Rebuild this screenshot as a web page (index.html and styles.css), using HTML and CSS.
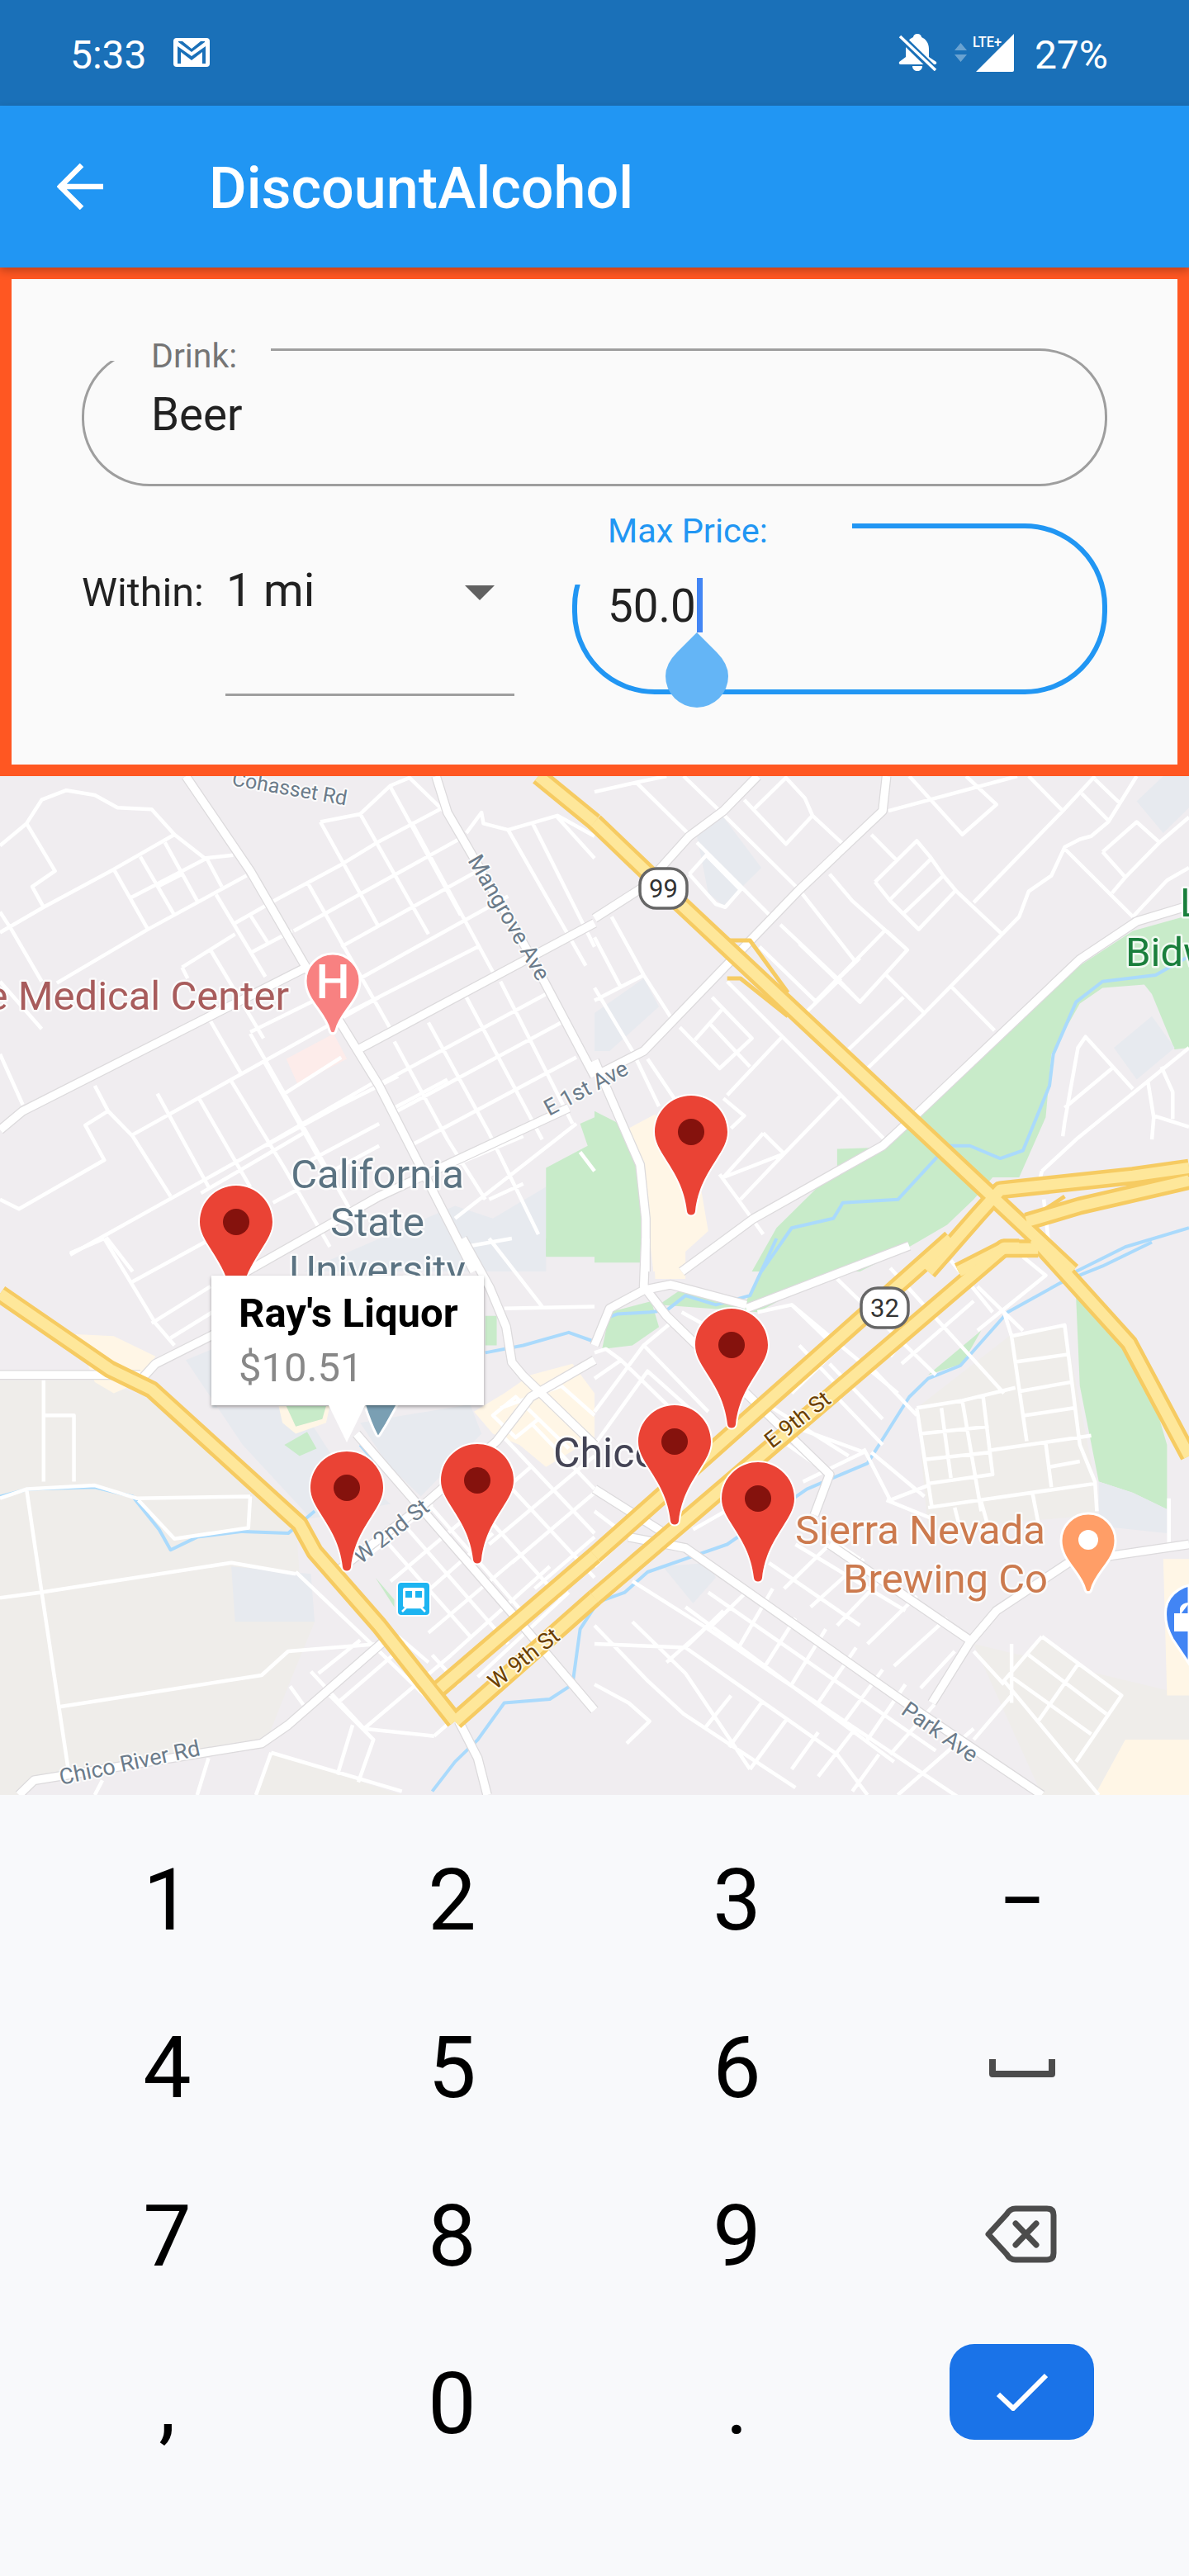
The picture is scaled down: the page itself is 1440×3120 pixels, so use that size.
FILE: index.html
```html
<!DOCTYPE html>
<html lang="en">
<head>
<meta charset="utf-8">
<title>DiscountAlcohol</title>
<link rel="stylesheet" href="styles.css">
</head>
<body>
<div class="screen">
  <header class="status">
    <div class="status-left">
      <span class="status-text">5:33</span>
      <svg class="gmail" viewBox="0 0 44 35" width="44" height="35"><rect width="44" height="35" rx="4" fill="#fff"/><path d="M5 31V10l17 12L39 10v21h-4V17L22 27 9 17v14z M6 4h5l11 9L33 4h5v1L22 17 6 5z" fill="#1a70b8"/></svg>
    </div>
    <div class="status-right">
      <svg class="bell" viewBox="0 0 47 45" width="47" height="45"><path d="M23 0C26 0 28 2 28 4C33 6 37 11 37 18V28L46 34Q47 37 44 37H3Q0 37 1 34L9 28V18C9 11 13 6 18 4C18 2 20 0 23 0Z" fill="#fff"/><path d="M17 39H29C29 43 26 45 23 45S17 43 17 39Z" fill="#fff"/><path d="M1 2L45 45" stroke="#1a70b8" stroke-width="9"/><path d="M2 3L45 44" stroke="#fff" stroke-width="3.500"/></svg>
      <svg class="signal" viewBox="0 0 72 47" width="72" height="47"><path d="M0 21L7.500 12 15 21zM0 26h15L7.500 35z" fill="#fff" opacity=".35"/><text x="22" y="17" class="lte" textLength="35" lengthAdjust="spacingAndGlyphs">LTE+</text><path d="M26 47L72 1v44a2 2 0 0 1-2 2z" fill="#fff"/></svg>
      <span class="status-text">27%</span>
    </div>
  </header>
  <div class="appbar">
    <svg class="back" viewBox="0 0 58 56" width="58" height="56"><path d="M2 28h54M30 2L4 28l26 26" fill="none" stroke="#fff" stroke-width="6.500"/></svg>
    <h1 class="title">DiscountAlcohol</h1>
  </div>
  <section class="form">
    <div class="drink">
      <label class="float-label">Drink:</label>
      <span class="value">Beer</span>
    </div>
    <div class="row">
      <span class="within">Within:</span>
      <div class="dropdown">
        <span class="dd-value">1 mi</span>
        <span class="dd-arrow"></span>
      </div>
      <div class="price">
        <label class="float-label active">Max Price:</label>
        <span class="value">50.0</span>
        <span class="cursor"></span>
        <svg class="handle" viewBox="0 0 76 91" width="76" height="91"><path d="M38 0L62 24Q76 38 76 53A38 38 0 0 1 0 53Q0 38 14 24Z" fill="#64b5f6"/></svg>
      </div>
    </div>
  </section>
  <section class="map">
    <svg class="map-art" viewBox="0 940 1440 1234" width="1440" height="1234">
      <defs>
        <g id="majors">
          <g transform="translate(0 940) scale(.4592 .3827)"><path d="M490 0L660 300L800 590L1000 980L1250 1568M0 1120L60 1060L800 610M945 865L1568 465M650 1568L1000 1330L1500 1050M1150 0L1180 115L1400 570L1568 950"/></g>
          <g transform="translate(720 940) scale(.4592 .3827)"><path d="M430 0L340 110L250 190L130 350L0 450M770 0L760 110L540 360L130 870L0 950M1568 410L1430 460L1280 580L850 1070L760 1170L420 1400L230 1568M0 900L120 1230L135 1400L135 1568"/></g>
          <g transform="translate(0 1500) scale(.4592 .4464)"><path d="M0 370L370 370M370 385L410 340L555 265L840 100M1220 0L1292 134L1335 240L1350 336L1380 373L1568 560M940 530L1370 1040L1568 1280M50 1510L90 1470L510 1400L690 1370L760 1320L1010 1095M1210 1310L1260 1410L1285 1510M880 910L1120 720L1310 550L1400 430L1568 330"/></g>
          <g transform="translate(720 1500) scale(.4592 .4464)"><path d="M135 0L130 130L190 210L620 640L580 750M0 290L40 190L130 140L200 125L400 180M90 810L240 840L820 1260L1180 1510M620 830L990 1090M1568 830L1370 860L1250 880L1060 1010L990 1095L890 1260M400 190L830 20M0 680L200 810"/></g>
        </g>
        <g id="highways">
          <g transform="translate(0 940) scale(.4592 .3827)"><path d="M1420 0L1568 145"/></g>
          <g transform="translate(720 940) scale(.4592 .3827)"><path d="M0 145L200 375L1260 1568M1568 1240L1420 1265L1070 1310L1010 1390L880 1568M1568 1280L1280 1360L1140 1410M1170 1495L1080 1495L960 1568"/></g>
          <g transform="translate(0 1500) scale(.4592 .4464)"><path d="M0 150L290 355L400 410L790 775L830 850L1000 1050L1200 1310M1568 860L1160 1220M1568 975L1200 1310"/></g>
          <g transform="translate(720 1500) scale(.4592 .4464)"><path d="M940 0L0 860M1120 25L1080 25L0 975M1160 0L1410 285L1568 590"/></g>
        </g>
        <g id="pin">
          <path d="M0 0C24.300 0 44 19.700 44 44C44 56 38 65 30 78C20 94 8 112 5 140C4.500 146 -4.500 146 -5 140C-8 112 -20 94 -30 78C-38 65 -44 56 -44 44C-44 19.700 -24.300 0 0 0Z" fill="#ea4335" stroke="#fff" stroke-width="4" paint-order="stroke"/>
          <circle cy="44" r="16" fill="#85120d"/>
        </g>
      </defs>

      <rect x="0" y="940" width="1440" height="1234" fill="#f0edf0"/>

      <g class="zones">
        <g transform="translate(0 1500) scale(.4592 .4464)">
          <path class="agri" d="M0 385H250L390 430L780 770L790 910L830 1040L760 1215L700 1370L510 1400L90 1470L50 1510H0Z"/>
          <path class="agri" d="M720 1395L1060 1510H680Z"/>
          <path class="campus-blue" d="M490 330L560 300V460H750L820 500L870 580L1030 720L820 760L640 560ZM950 500L1240 450L1270 530L1110 700L1020 610ZM610 890L820 910L830 1040L620 1040Z"/>
          <path class="cream" d="M200 260L300 265L410 320L370 390L300 420L250 390ZM1250 470L1330 420L1400 370L1510 340L1568 420L1568 540L1440 620L1370 560L1300 530ZM735 455H870L860 500L780 530L745 500Z"/>
          <path class="green" d="M750 560L810 525L835 570L790 590ZM990 920L1040 980V1000ZM755 455H860L850 490L780 510Z"/>
          <path class="green" d="M1440 0H1568V50H1440ZM1280 210H1310V290H1280Z"/>
        </g>
        <g transform="translate(720 1500) scale(.4592 .4464)">
          <path class="agri" d="M850 460L1100 260L1240 235L1320 660L1325 750L880 790ZM1180 1080L1390 1240L1270 1420L1090 1210ZM1000 1100L1568 1240V1360H1400L1320 1510L1180 1510Z"/>
          <path class="green" d="M0 0H120V60H0ZM20 300L40 200L150 170L170 240L100 290ZM170 180L240 130L400 170L480 0H800L430 200L300 190ZM1270 160L1430 280L1510 560V735L1420 690L1330 660L1280 400ZM880 370L1020 250L970 340Z"/>
          <path class="campus-blue" d="M1330 660L1420 690L1510 735V800L1330 780ZM180 890L300 880L320 920L260 990Z"/>
          <path class="cream" d="M1320 1510L1400 1360H1568V1510ZM1500 870H1568V1240H1510ZM155 0H240V110H160Z"/>
        </g>
        <g transform="translate(0 940) scale(.4592 .3827)">
          <path class="pinkish" d="M755 895L880 815L915 895L785 975Z"/>
          <path class="campus-blue" d="M1300 1400L1440 1300V1568H800L1200 1360Z"/>
          <path class="green" d="M1530 1100L1568 1080V1520L1440 1520V1240L1550 1170Z"/>
        </g>
        <g transform="translate(720 940) scale(.4592 .3827)">
          <path class="green" d="M0 1060L90 1115L130 1270L120 1540H0Z"/>
          <path class="green" d="M415 1568L480 1430L640 1240L640 1180L760 1175L850 1075L1280 600L1420 490L1568 440V860L1530 865L1470 690L1450 660L1340 670L1280 720L1205 880L1190 1080L1120 1270L1050 1270L1000 1340L930 1420L830 1490L700 1568Z"/>
          <path class="cream" d="M90 1115L160 1070L240 1230L280 1300L300 1440L235 1510V1568H155L140 1400L130 1240Z"/>
          <path class="campus-blue" d="M270 190L340 130L440 290L340 410L300 370ZM0 750L130 640L170 730L40 870H0ZM1430 80L1500 0H1568V100L1500 180ZM1370 860L1470 760L1530 860L1430 960Z"/>
        </g>
      </g>

      <g class="water">
        <g transform="translate(720 940) scale(.4592 .3827)"><path d="M440 1568L520 1430L630 1400L655 1350L800 1340L900 1210L930 1170L990 1170L1070 1210L1130 1185L1200 980L1210 880L1270 715L1340 650L1480 630L1568 570M1270 1568L1400 1490L1568 1430"/></g>
        <g transform="translate(0 1500) scale(.4592 .4464)"><path d="M0 700L75 680L250 675L350 700L420 790L450 845L520 810L640 795L760 800L830 740M1140 1500L1200 1420L1260 1360L1330 1260L1450 1250L1510 1210L1530 1060L1568 1000M1280 310L1380 290L1500 255L1568 280M950 560L1000 620"/></g>
        <g transform="translate(720 1500) scale(.4592 .4464)"><path d="M0 990L80 960L140 905L280 855L350 830L560 680L720 610L830 430L880 380L965 345L1090 200L1230 120L1340 75L1470 10M20 220L60 205L145 200L190 195L240 155L320 180L410 155L480 0"/></g>
      </g>

      <g class="minor">
        <g transform="translate(0 940) scale(.4592 .3827)"><path d="M0 220L70 150L110 75L175 45L250 60L310 100L400 105L460 185L540 260L615 250M70 150L145 300L85 350L115 415M0 495L115 415L300 295L460 185M0 430L30 485L110 650M300 295L390 485M370 255L460 440M435 210L520 395M345 385L545 260M415 350L480 310M150 655L390 485L650 315M545 260L585 350M570 375L700 635M620 465L730 390L900 280L995 210L1160 105M660 440L705 525M660 560L770 490M480 605L620 500M480 605L495 640M555 550L695 830M810 335L1030 800M845 145L950 120L1030 30L1080 5L1170 110M845 145L1000 480M950 120L1130 500M1030 35L1215 440M775 490L1210 200M900 540L1260 300M950 640L1340 380M900 760L1260 540M1000 975L1440 690M1040 1065L1480 780M1090 1165L1520 890M1200 1400L1520 1100M1290 1340L1380 1290M1040 840L1180 1150L1280 1340M1130 780L1290 1130L1420 1450M1230 700L1430 1150M1320 650L1510 1100M1340 170L1545 600M1405 150L1568 540M1470 130L1568 260M1230 180L1270 115L1275 150L1340 170L1470 125L1568 190M1085 145L1300 620M250 980L285 1060L350 1140L450 1330M285 1060L225 1105L275 1215L50 1370L0 1340M415 1005L550 1300M525 1020L660 1300M610 965L750 1240L870 1490M555 775L635 940M660 815L795 1100L960 1450M695 900L860 1250M350 1135L700 900L1000 700M185 1515L640 1210L1000 960M750 1005L900 890M800 1100L1050 950M530 1320L800 1130M700 1170L930 1020M0 880L60 1040M0 650L110 800M280 1460L350 1568M660 810L880 680M720 1350L1000 1170M820 1215L1000 1100M1040 1050L1180 960M1200 1230L1380 1140M1530 1190L1568 1250"/></g>
        <g transform="translate(720 940) scale(.4592 .3827)"><path d="M0 50L110 20L190 0M110 20L250 185M235 0L330 110L540 360L690 590M270 210L470 450M250 310L295 250L385 360L345 415L320 405L250 310M395 75L505 215L575 125L555 70L505 5L420 105M575 125L660 220M620 310L680 395L825 550L700 715L540 530M730 185L800 270M740 335L850 205L885 255L920 315L955 365L1075 500M740 335L780 395L855 485L950 365M780 390L885 265M815 435L920 315M1000 400L1235 110L1320 0M1075 500L1120 445L1145 365L1205 315L1240 225L1280 200L1310 190L1355 145L1430 0M1145 0L1235 110M1285 55L1355 140M1320 10L1385 85M830 0L970 185L1060 90L980 0M775 110L1115 0M1240 230L1420 445M1340 240L1430 145L1490 210L1568 130M1340 240L1400 320L1490 210M1365 370L1400 320M1420 445L1510 330L1568 290M435 540L585 715M490 470L640 640L700 715M585 710L765 490M640 645L700 575M560 745L650 640M770 490L825 550M770 630L870 750L1075 500M670 865L815 700M720 925L870 750M940 665L1055 805M350 650L650 1010L765 1150M495 825L350 1010M650 1010L500 1195L340 1270M310 700L415 830L330 925L225 795M265 835L335 740M305 785L410 920M130 630L0 710M45 445L130 630L205 770M0 670L100 870L170 1045M140 895L210 1020M340 1020L395 1075L360 1115M445 1130L500 1195M445 1130L340 1270M330 1260L415 1400L445 1450M385 1340L500 1195M1240 1095L1275 860L1295 825L1420 990M1240 1050L1365 925M1275 1145L1568 860M1495 920L1525 1000L1525 1085M1460 970L1475 1080L1470 1150M1475 1075L1568 1110M1180 1250L1275 1145M1170 1300L1180 1250M1185 1340L1200 1500M1240 1095L1235 1140M0 510L70 670"/></g>
        <g transform="translate(0 1500) scale(.4592 .4464)"><path d="M185 40L275 0M275 0L410 230L460 290M345 120L540 10M400 230L555 130M450 270L560 200M1240 20L1350 0M1330 190L1568 185M1290 0L1430 185M115 385V660M115 480H195V660M0 705L70 680L250 670L360 705L660 700M660 700L655 785L460 815L365 710M70 680L110 960L180 1440M0 975L110 960L610 880L780 910M160 1270L690 1185L760 1120L1000 1100M780 905L1010 1130L1190 1310M960 870L1140 720M1030 930L1250 740M1080 1000L1300 800M1130 1070L1360 870M1190 1130L1450 890M1260 1190L1500 960M1290 830L1568 590M1350 880L1568 690M1410 950L1568 810M1220 780L1400 620M1000 800L1240 1080M1060 770L1340 1100M1130 720L1400 1040M1200 660L1480 980M1270 590L1568 920M1320 530L1568 800M1400 500L1568 680M1430 420L1568 570M765 1215L800 1265M820 1175L960 1330L1145 1350M870 1240L985 1360L945 1475M930 1320L890 1455M715 1395L1060 1500M715 1395L675 1510M550 1410L520 1510M270 1470L250 1510M1145 1350L1290 1220M960 1330L1190 1130M840 1180L950 1090M890 1260L1060 1110M1320 460L1480 400L1568 480M1360 430L1420 490L1360 540L1300 480ZM1420 490L1500 570M1140 1130L1210 1210M1050 1080L1130 1150"/></g>
        <g transform="translate(720 1500) scale(.4592 .4464)"><path d="M0 380L70 330L220 480M0 470L130 290L300 470M70 330L30 300L0 310M130 290L200 230L250 260M0 560L140 360L260 470M230 200L300 240M430 200L520 180L800 420M520 180L640 300L520 420M640 110L900 370M780 80L1080 420M940 60L1050 200M1010 130L1130 250M1130 50L1190 100L1010 250M810 340L1000 170M880 190L780 320M620 340L760 490M680 390L810 260M730 350L850 480M620 410L760 560M550 520L710 580L670 600L550 660M470 460L670 590M510 560L620 640M540 290L660 420M710 570L780 710M780 710L880 670M0 1100L240 1110M240 1110L640 1400L720 1510M300 960L900 1390M240 1000L790 1420M100 930L300 1060L470 1180L980 1530M0 1210L90 1260L145 1310L85 1370M0 1050L140 1200L235 1290L530 1490M100 1040L240 1180L410 1440M190 1150L300 1050M240 1110L340 1010M300 1060L410 950M380 1110L470 950M450 1160L530 1030M520 1210L610 1060M590 1260L690 1110M660 1310L760 1170M720 1360L820 1210M780 1400L900 1260M290 1330L360 1240M355 1380L440 1260M410 1440L510 1300M520 1440L590 1340M590 1460L680 1340M680 1500L750 1400M460 880L700 1050M530 830L820 1010M600 800L700 870M720 900L900 1020M500 950L620 830M570 1000L710 870M640 1050L780 900M720 1100L850 970M790 1160L930 1030M860 1220L950 1120M1000 1120L1080 1210M1180 1080L1390 1240L1270 1420M1180 1080L1080 1200L1330 1510M1145 1130L1350 1290M1100 1190L1310 1345M1275 1155L1170 1310M800 1510L1000 1330M1100 1240L1000 1360M1100 1260L1100 1100M0 740L90 810M170 700L260 780M0 890L110 780M130 870L250 740M260 790L430 690M1100 265L1240 235L1280 560L1320 660L1325 740M1100 265L1140 550M1110 335L1245 315M1120 415L1255 390M850 460L970 440L1110 405M1135 480L1265 460M850 460L890 730M860 530L1040 510M870 600L1045 580M970 440L1020 740M915 460L940 650M1025 430L1050 640L880 665M1040 575L1310 535M1190 555L1205 675M1200 620L1280 605M880 730L1320 665M1155 690L1170 770M1020 715L1035 770M950 730L960 770M1080 200L1100 265M1515 705V840M730 580L870 700M770 710L890 760"/></g>
      </g>

      <use href="#majors" class="casing"/>
      <use href="#majors" class="major"/>
      <g class="ramp" transform="translate(720 940) scale(.4592 .3827)"><path d="M355 520H410L510 685M350 640H385L510 760M1010 1390L1100 1320M1140 1410L1240 1330"/></g>
      <use href="#highways" class="hw-edge"/>
      <use href="#highways" class="hw-fill"/>

      <g>
        <text x="350" y="1223" text-anchor="end" class="poi poi-med">e Medical Center</text>
        <text x="457" y="1439" text-anchor="middle" class="poi poi-uni">California</text>
        <text x="457" y="1497" text-anchor="middle" class="poi poi-uni">State</text>
        <text x="457" y="1555" text-anchor="middle" class="poi poi-uni">University</text>
        <text x="670" y="1777" class="poi poi-city">Chico</text>
        <text x="963" y="1870" class="poi poi-bar">Sierra Nevada</text>
        <text x="1021" y="1929" class="poi poi-bar">Brewing Co</text>
        <text x="1429" y="1110" class="poi poi-park">L</text>
        <text x="1363" y="1170" class="poi poi-park">Bidw</text>
        <text transform="translate(280 951) rotate(10)" class="street street-sm">Cohasset Rd</text>
        <text transform="translate(566 1042) rotate(60)" class="street">Mangrove Ave</text>
        <text transform="translate(665 1352) rotate(-28)" class="street">E 1st Ave</text>
        <text transform="translate(437 1895) rotate(-38)" class="street">W 2nd St</text>
        <text transform="translate(600 2047) rotate(-38)" class="street brown">W 9th St</text>
        <text transform="translate(935 1755) rotate(-38)" class="street brown">E 9th St</text>
        <text transform="translate(1090 2075) rotate(35)" class="street">Park Ave</text>
        <text transform="translate(74 2162) rotate(-12)" class="street">Chico River Rd</text>
      </g>

      <g class="shield"><rect x="775" y="1052" width="57" height="48" rx="20"/><text x="803.500" y="1087" text-anchor="middle">99</text></g>
      <g class="shield"><rect x="1043" y="1560" width="57" height="48" rx="20"/><text x="1071.500" y="1595" text-anchor="middle">32</text></g>

      <g>
        <path d="M403 1155C421 1155 436 1170 436 1188C436 1212 412 1226 407 1248C406 1253 400 1253 399 1248C394 1226 370 1212 370 1188C370 1170 385 1155 403 1155Z" fill="#f88181" stroke="#fff" stroke-width="3"/>
        <text x="403" y="1209" text-anchor="middle" class="pin-h">H</text>
      </g>
      <g>
        <path d="M1318 1833C1336 1833 1351 1848 1351 1866C1351 1890 1327 1904 1322 1925C1321 1930 1315 1930 1314 1925C1309 1904 1285 1890 1285 1866C1285 1848 1300 1833 1318 1833Z" fill="#ff9e67" stroke="#fff" stroke-width="3"/>
        <circle cx="1318" cy="1865" r="12" fill="#fff"/>
      </g>
      <path d="M441 1700H482L468 1725L460 1738Q458 1741 456 1738Q449 1725 441 1700Z" fill="#7a9fb3" stroke="#fff" stroke-width="3"/>
      <g>
        <path d="M1412 1948C1416 1925 1440 1920 1440 1920V2015L1420 1985C1415 1975 1410 1965 1412 1948Z" fill="#4285f4" stroke="#fff" stroke-width="3"/>
        <path d="M1423 1955H1440V1975H1423ZM1430 1955V1948Q1432 1942 1440 1942" fill="#fff" stroke="#fff" stroke-width="2"/>
      </g>
      <g>
        <rect x="481" y="1916" width="40" height="41" rx="5" fill="#1db4f1" stroke="#fff" stroke-width="2"/>
        <path d="M490 1923H512Q514 1923 514 1926V1944Q514 1947 511 1947H491Q488 1947 488 1944V1926Q488 1923 490 1923Z" fill="#fff"/>
        <path d="M491 1927H499V1935H491ZM503 1927H511V1935H503Z" fill="#1db4f1"/>
        <path d="M487 1952L492 1947H510L515 1952" fill="none" stroke="#fff" stroke-width="2.500"/>
      </g>

      <use href="#pin" x="837" y="1327"/>
      <use href="#pin" x="286" y="1436"/>
      <use href="#pin" x="578" y="1749"/>
      <use href="#pin" x="420" y="1758"/>
      <use href="#pin" x="886" y="1585"/>
      <use href="#pin" x="817" y="1702"/>
      <use href="#pin" x="918" y="1771"/>
    </svg>
    <div class="bubble">
      <strong class="bubble-title">Ray's Liquor</strong>
      <span class="bubble-price">$10.51</span>
    </div>
  </section>
  <section class="keyboard">
    <span class="key">1</span><span class="key">2</span><span class="key">3</span><span class="key key-dash">–</span>
    <span class="key">4</span><span class="key">5</span><span class="key">6</span>
    <span class="key"><svg class="icon-space" viewBox="0 0 80 22" width="80" height="22"><path d="M4 0v18h72V0" fill="none" stroke="#4c4c4c" stroke-width="8" stroke-linejoin="round"/></svg></span>
    <span class="key">7</span><span class="key">8</span><span class="key">9</span>
    <span class="key"><svg class="icon-back" viewBox="0 0 88 70" width="88" height="70"><path d="M5 35L27 11Q31 4 38 4H76Q84 4 84 12V58Q84 66 76 66H38Q31 66 27 59Z" fill="none" stroke="#4c4c4c" stroke-width="7" stroke-linejoin="round"/><path d="M38 22L63 48M63 22L38 48" stroke="#4c4c4c" stroke-width="7" stroke-linecap="round"/></svg></span>
    <span class="key">,</span><span class="key">0</span><span class="key">.</span>
    <span class="enter"><svg viewBox="0 0 62 46" width="62" height="46"><path d="M2 26L20 43L60 3" fill="none" stroke="#fff" stroke-width="6"/></svg></span>
  </section>
</div>
</body>
</html>
```
FILE: styles.css
```css
* { box-sizing: border-box; }
html, body { margin: 0; padding: 0; }
body { font-family: Roboto, "Noto Sans", sans-serif; background: #f8f9fb; }
.screen { width: 1440px; height: 3120px; overflow: hidden; display: flex; flex-direction: column; }

.status { height: 128px; background: #1a70b8; color: #fff; display: flex; align-items: center; justify-content: space-between; padding: 5px 98px 0 85px; flex: none; }
.status-left, .status-right { display: flex; align-items: center; }
.status-text { font-size: 48px; line-height: 56px; }
.gmail { margin-left: 32px; margin-top: -6px; }
.bell { margin-top: -6px; margin-right: 21px; }
.signal { margin-top: -6px; margin-right: 25px; }
.lte { font: 500 19px Roboto, sans-serif; fill: #fff; }

.appbar { height: 196px; background: #2196f3; display: flex; align-items: center; padding-left: 69px; flex: none; position: relative; z-index: 2; box-shadow: 0 4px 10px rgba(0,0,0,.25); }
.title { margin: 0 0 0 126px; font-size: 70px; font-weight: 500; line-height: 80px; color: #fff; padding-top: 4px; }

.form { height: 616px; flex: none; border: 14px solid #ff5722; background: #fafafa; padding: 84px 85px 0 85px; color: #212121; }
.drink { position: relative; height: 167px; border: 3px solid #9e9e9e; border-radius: 82px; padding: 45px 0 0 81px; }
.value { font-size: 54.700px; line-height: 64px; display: block; }
.float-label { position: absolute; left: 26px; top: -18.500px; width: 200px; height: 30px; padding-left: 55px; font-size: 41px; line-height: 48px; color: #757575; background: #fafafa; white-space: nowrap; }
.row { display: flex; align-items: flex-start; margin-top: 44.500px; height: 210px; }
.within { width: 174px; font-size: 48.500px; line-height: 64px; margin-top: 52px; }
.dropdown { width: 349.500px; height: 209.500px; border-bottom: 3px solid #9e9e9e; display: flex; justify-content: space-between; align-items: flex-start; padding: 0 23.500px 0 1px; }
.dd-value { font-size: 55.500px; line-height: 64px; margin-top: 50px; }
.dd-arrow { margin-top: 75.500px; width: 0; height: 0; border-left: 18px solid transparent; border-right: 18px solid transparent; border-top: 18px solid #616161; }
.price { position: relative; margin-left: 70.500px; width: 648px; height: 207px; border: 6px solid #2196f3; border-radius: 100px; padding: 62.500px 0 0 37px; }
.float-label.active { left: -16px; top: -20.500px; width: 349px; height: 89px; padding-left: 53px; font-size: 41.500px; color: #2196f3; }
.cursor { position: absolute; left: 145px; top: 60.500px; width: 7px; height: 66px; background: #4285f4; }
.handle { position: absolute; left: 107px; top: 126.500px; }

.map { position: relative; height: 1234px; flex: none; overflow: hidden; }
.map-art { display: block; }
.minor path { fill: none; stroke: #fff; stroke-width: 4.500; stroke-linejoin: round; }
.minor path, .water path, .ramp path, #majors path, #highways path { vector-effect: non-scaling-stroke; fill: none; stroke-linejoin: round; }
.water path { stroke: #aadafc; stroke-width: 4; }
.ramp path { stroke: #f6cb62; stroke-width: 5; }
.casing { stroke: #dcdadc; stroke-width: 12; }
.major { stroke: #fff; stroke-width: 9.500; }
.hw-edge { stroke: #f6cb62; stroke-width: 22; }
.hw-fill { stroke: #fee79a; stroke-width: 13; }
.zones .agri { fill: #efedea; }
.zones .green { fill: #c8ebc9; }
.zones .cream { fill: #fff6e6; }
.zones .campus-blue { fill: #e7eaef; }
.zones .pinkish { fill: #fdecea; }
.poi { font-size: 49px; paint-order: stroke; stroke: rgba(255,255,255,.75); stroke-width: 5px; stroke-linejoin: round; }
.poi-med { fill: #a85c5c; }
.poi-uni { fill: #5b7382; }
.poi-city { fill: #444455; font-size: 50px; }
.poi-bar { fill: #cc7a4e; }
.poi-park { fill: #1a7f3c; }
.street { font-size: 27px; fill: #6b7b8a; paint-order: stroke; stroke: rgba(255,255,255,.8); stroke-width: 4px; stroke-linejoin: round; }
.street-sm { font-size: 25px; }
.street.brown { fill: #6b3f00; }
.shield rect { fill: #fff; stroke: #666; stroke-width: 3.500; }
.shield text { font-size: 31px; fill: #333; }
.pin-h { font-size: 58px; font-weight: 500; fill: #fff; }

.bubble { position: absolute; left: 256px; top: 605px; width: 330px; height: 157px; background: #fff; box-shadow: 0 2px 4px rgba(0,0,0,.35); padding: 18px 0 0 33px; font-size: 49px; }
.bubble::after { content: ""; position: absolute; left: 142px; top: 157px; width: 0; height: 0; border-left: 22.500px solid transparent; border-right: 22.500px solid transparent; border-top: 45px solid #fff; }
.bubble-title { display: block; font-weight: 700; color: #000; line-height: 56px; }
.bubble-price { display: block; color: #888; line-height: 76px; }

.keyboard { flex: 1; background: #f8f9fb; display: grid; grid-template-columns: repeat(4, 345px); grid-auto-rows: 203.500px; padding: 26px 30px 0; align-content: start; }
.key { display: flex; align-items: center; justify-content: center; font-size: 104px; line-height: 1; color: #000; }
.key-dash { font-size: 82px; font-weight: 500; }
.icon-back { margin: 0 4px 5px 0; }
.enter { width: 175px; height: 116px; margin-top: 28px; justify-self: center; align-self: start; background: #1a73e8; border-radius: 30px; display: flex; align-items: center; justify-content: center; }
```
